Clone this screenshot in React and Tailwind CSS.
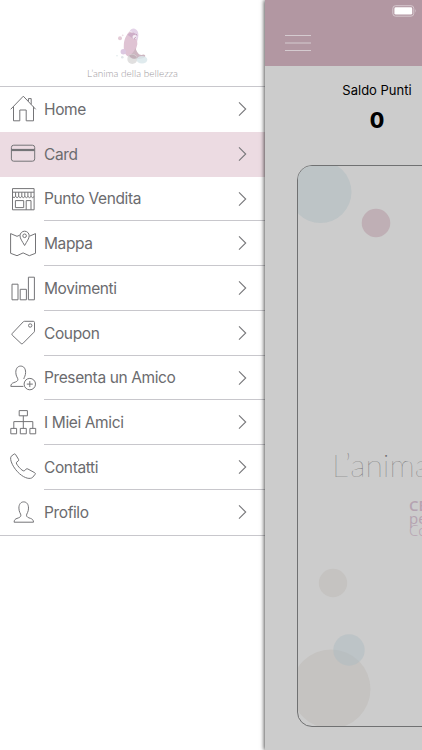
import React from 'react';

const icons = {
  home: (
    <>
      <path d="M2.7 16.3 15.3 3.2 27.7 16.3M5.5 13.6v14.2h6.3V17h6.4v10.8h7.3V13.6" />
      <path d="M20.4 8.3V5.6h2.8v5.8" />
    </>
  ),
  card: (
    <>
      <rect x="3.4" y="7.2" width="23.3" height="16" rx="2.3" />
      <path d="M3.4 12h23.3" strokeWidth="2.2" />
    </>
  ),
  store: (
    <>
      <path d="M4.5 5.6h21.6v21.2H4.5zM4.5 9.2h21.6M7.6 9.2v4.5M10.7 9.2v4.5M13.8 9.2v4.5M16.8 9.2v4.5M19.9 9.2v4.5M23 9.2v4.5" />
      <path d="M4.5 13.5q1.5 2.4 3.1 0q1.5 2.4 3.1 0q1.5 2.4 3.1 0q1.5 2.4 3.1 0q1.5 2.4 3.1 0q1.5 2.4 3.1 0q1.5 2.4 3.1 0" />
      <path d="M7.4 17.6h8.3v7H7.4zM18.2 26.8v-9.2H23v9.2" />
    </>
  ),
  map: (
    <>
      <path d="M11.7 7.2 9 8.3 2.6 5.6v19.7l6.4 2.4 6.1-2.8 6.2 2.8 6.2-2.4V5.6l-6 2.6" />
      <path d="M16.6 17.5C14.3 13.4 12 10.6 12 7.8a4.6 4.6 0 0 1 9.2 0c0 2.8-2.3 5.6-4.6 9.7z" />
      <circle cx="16.6" cy="7.8" r="1.8" />
    </>
  ),
  bars: <path d="M4 12.2h6v15.6H4zM12.2 17.3h6.2v10.5h-6.2zM20.4 5.2h6v22.6h-6z" />,
  tag: (
    <>
      <path d="M16.3 4.3h9a1.2 1.2 0 0 1 1.2 1.2v8.4q0 .8-.5 1.3L14.8 26.5q-.9.8-1.7 0l-8.8-8.3q-.8-.9 0-1.8L15.2 4.9q.5-.6 1.1-.6z" />
      <circle cx="22.2" cy="8.5" r="1.7" />
    </>
  ),
  invite: (
    <>
      <path d="M15.4 24.4H2.8c.1-2.2 1.2-3.2 3-3.8 2.4-.8 4.1-1.4 4.1-3.3 0-1.2-2.1-3-2.1-6.9 0-3.8 1.800-6.300 4.900-6.300s4.900 2.500 4.900 6.300c0 3.200-1.500 4.800-1.800 6.600" />
      <circle cx="21.8" cy="22.1" r="5.7" />
      <path d="M21.8 19.1v6M18.8 22.1h6" />
    </>
  ),
  tree: (
    <path d="M11.2 3.6h8.2v5.2h-8.2zM15.3 8.8v12.6M5.8 21.4v-6.8h19v6.8M2.8 21.4h5.8v5.4H2.8zM12.3 21.4h6v5.4h-6zM21.9 21.4h5.8v5.4h-5.8z" />
  ),
  phone: (
    <path d="M3.2 5.3 5.9 3.2q.9-.7 1.6.2l3 4.9q.6 1-.3 1.7l-1.7 1.3c-.7.7.4 2.4 2.4 4.8 2.2 2.4 4.2 4.2 5.4 3.8l1.800-1.800q.8-.8 1.800-.1l6.800 3.700q1.100.7.4 1.600l-2.400 3c-2.400 2.200-7.700 1.200-13.200-3.600C5.700 17.700.9 8.400 3.200 5.300z" />
  ),
  profile: (
    <path d="M6.1 26.2h19.4c-.1-2.4-1.3-3.2-3-3.8-2.4-.8-4-1.4-4-3.2 0-1.4 2-3 2-7.1 0-3.8-1.8-6.2-4.8-6.2s-4.8 2.4-4.8 6.2c0 4.1 2 5.7 2 7.1 0 1.8-1.6 2.4-3.9 3.2-1.7.6-2.8 1.4-2.9 3.8z" />
  ),
};

const items = [
  { icon: 'home', label: 'Home', border: 'border-transparent' },
  { icon: 'card', label: 'Card', active: true, border: 'border-transparent' },
  { icon: 'store', label: 'Punto Vendita' },
  { icon: 'map', label: 'Mappa' },
  { icon: 'bars', label: 'Movimenti' },
  { icon: 'tag', label: 'Coupon' },
  { icon: 'invite', label: 'Presenta un Amico' },
  { icon: 'tree', label: 'I Miei Amici' },
  { icon: 'phone', label: 'Contatti' },
  { icon: 'profile', label: 'Profilo', border: 'border-transparent' },
];

function MenuItem({ icon, label, active, border = 'border-[#c8c7cc]' }) {
  return (
    <li className={`flex h-[44.75px] pl-2 ${active ? 'bg-[#ecdbe2]' : ''}`}>
      <svg viewBox="0 0 32 32" className="mt-[6.2px] h-8 w-8 shrink-0" fill="none" stroke="#747477" strokeWidth="1" strokeLinejoin="round">
        {icons[icon]}
      </svg>
      <div className={`ml-1 flex flex-1 items-center justify-between border-b pr-[18px] ${border}`}>
        <span className="pt-[1.5px] text-[15.5px] leading-5 tracking-[-0.38px] text-[#6b6b6e]">{label}</span>
        <svg viewBox="0 0 9 16" className="h-4 w-[9px]" fill="none" stroke="#77777a" strokeWidth="1.1">
          <path d="M1 1.4 7.7 8 1 14.6" />
        </svg>
      </div>
    </li>
  );
}

function Logo() {
  return (
    <svg viewBox="0 0 45 45" className="h-[45px] w-[45px] shrink-0">
      <path d="M19.5 9.5C21 5.500 26 5 28 10c1 3 0 7-1 10l-2.500-6c-.5-3-2.500-5-5-4.500z" fill="#e4d3e8" />
      <path d="M19.500 9.500c-3 3-5.500 8-5.700 13.500-.2 6 .7 10 5.700 12 3-1 5.500-4 6.500-8l1.300-4.500c.5-4-2.300-11-7.800-13z" fill="#dfc3d3" />
      <path d="M17.500 13c2-3 6-3.500 8.500-1l-2 3 1.500 3c-2.500-1-5-3.500-8-5z" fill="#cdaec8" />
      <path d="M18 34.500c4-2 6-5 7.500-8.500 1 3.500 3 7 6 7 2.500-1.300 4.500 0 3.500 2-2.500 2.500-13 3.500-17-.5z" fill="#cdb6c1" />
      <circle cx="22.300" cy="37" r="5" fill="#dcdadb" opacity=".85" />
      <ellipse cx="32" cy="37.800" rx="5.300" ry="3.800" fill="#dbe8eb" opacity=".85" />
      <path d="M19 33.500c3-2 6.500-1 8 2.500-3 1.500-6.500.5-8-2.500z" fill="#c2b0b9" />
      <circle cx="24.500" cy="15" r="2" fill="#f6eef5" />
      <path d="m26 12.300 1.200 1M24 16.700l1.800-1.500" stroke="#b78ead" strokeWidth=".9" />
      <circle cx="13.300" cy="29.700" r="2.700" fill="#dcc8e1" />
      <circle cx="10" cy="16.300" r="2" fill="#e4ccd7" />
      <circle cx="12.700" cy="13.300" r=".9" fill="#ecdce4" />
      <circle cx="7" cy="33.700" r=".8" fill="#e0e9eb" />
      <circle cx="12.300" cy="35.300" r="1.300" fill="#e0e6e8" />
    </svg>
  );
}

function Drawer() {
  return (
    <nav className="flex w-[265px] shrink-0 flex-col bg-white">
      <header className="flex h-[87.200px] flex-col items-center border-b border-[#c8c7cc] pt-[22px]">
        <Logo />
        <span className="font-[Lato] text-[10px] leading-[13px] font-light whitespace-nowrap text-[#9d999d]">
          L’anima della bellezza
        </span>
      </header>
      <ul className="border-b border-[#c8c7cc]">
        {items.map((item) => (
          <MenuItem key={item.label} {...item} />
        ))}
      </ul>
    </nav>
  );
}

function LoyaltyCard() {
  return (
    <div className="relative ml-8 h-[562px] w-[330px] shrink-0 overflow-hidden rounded-[15px] border border-[#707172] pt-[283px] pl-[34px]">
      <svg viewBox="0 0 328 560" className="absolute top-0 left-0 h-[560px] w-[328px]">
        <circle cx="22.5" cy="26" r="31" fill="#bdc4c6" />
        <circle cx="78" cy="57" r="14.3" fill="#bfafb5" />
        <circle cx="35" cy="417" r="14.2" fill="#c5c3c1" />
        <circle cx="33" cy="523" r="39.5" fill="#c5c3c1" />
        <circle cx="51" cy="484" r="15.7" fill="#adbcc1" opacity=".5" />
      </svg>
      <div className="relative font-[Lato] text-[32px] leading-8 font-thin whitespace-nowrap text-[#666666]">
        L’anima della bellezza
      </div>
      <div className="relative mt-[18px] ml-[77px] flex flex-col font-['Open_Sans'] text-[15px] leading-[12.5px] whitespace-nowrap text-[#b5a3b1]">
        <span className="font-semibold">CENTRO</span>
        <span>per il</span>
        <span className="font-light">Corpo</span>
      </div>
    </div>
  );
}

function Page() {
  return (
    <main className="flex min-w-0 flex-1 flex-col overflow-hidden bg-[#cccccc]">
      <header className="flex h-[66px] shrink-0 flex-col bg-[#b297a2]">
        <div className="flex h-[21px] items-center justify-end pr-[5px]">
          <svg viewBox="0 0 25 12" className="h-3 w-[25px]">
            <rect x=".8" y=".7" width="21" height="10.5" rx="2.8" fill="none" stroke="#d5c7cd" />
            <rect x="2.4" y="2.3" width="17.8" height="7.3" rx="1.4" fill="#fff" />
            <path d="M23.2 4.1q1.4 1.8 0 3.7z" fill="#d5c7cd" />
          </svg>
        </div>
        <svg viewBox="0 0 26 18" className="mt-[13px] ml-5 h-[18px] w-[26px]" stroke="#d5cbd0" strokeWidth="1">
          <path d="M0 1.500h26M0 9h26M0 16.500h26" />
        </svg>
      </header>
      <section className="flex h-[99px] w-[224px] shrink-0 flex-col items-center pt-[14px] text-black">
        <span className="text-[13px] leading-5">Saldo Punti</span>
        <span className="mt-[9px] text-[21px] leading-6 font-extrabold">0</span>
      </section>
      <LoyaltyCard />
    </main>
  );
}

export default function App() {
  return (
    <div className="flex h-[750px] w-[422px] overflow-hidden bg-white font-[Inter,sans-serif]">
      <Drawer />
      <div className="z-10 flex min-w-0 flex-1 shadow-[-1px_0_4px_rgba(0,0,0,0.65)]">
        <Page />
      </div>
    </div>
  );
}
